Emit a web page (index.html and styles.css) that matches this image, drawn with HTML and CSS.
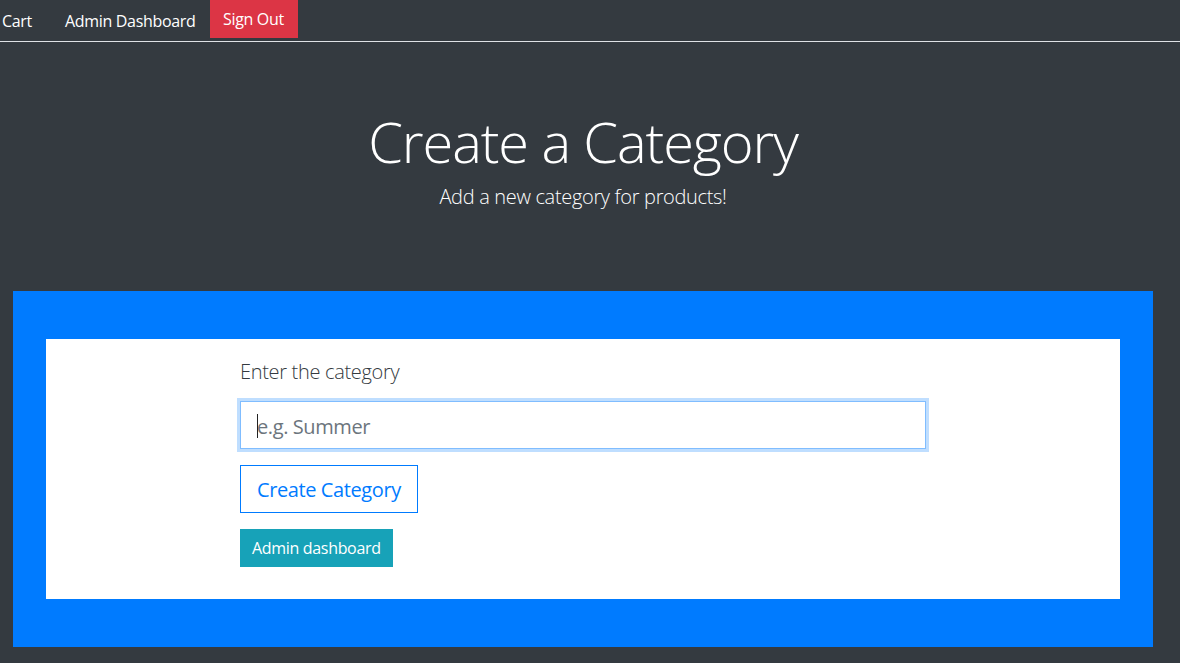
FILE: index.html
```html
<!DOCTYPE html>
<html lang="en">
<head>
<meta charset="utf-8">
<title>Create a Category</title>
<link rel="stylesheet" href="styles.css">
</head>
<body>
<nav class="topnav">
  <a class="nav-link nav-cart" href="#">Cart</a>
  <a class="nav-link nav-admin" href="#">Admin Dashboard</a>
  <a class="nav-signout" href="#">Sign Out</a>
</nav>
<header class="hero">
  <h1 class="hero-title">Create a Category</h1>
  <p class="hero-lead">Add a new category for products!</p>
</header>
<main class="panel">
  <div class="card">
    <form class="form">
      <label class="form-label" for="category">Enter the category</label>
      <div class="input-wrap">
        <input class="form-input is-focused" id="category" type="text" placeholder="e.g. Summer">
        <span class="caret"></span>
      </div>
      <div class="actions">
        <button class="btn-outline" type="button">Create Category</button>
        <a class="btn-info" href="#">Admin dashboard</a>
      </div>
    </form>
  </div>
</main>
</body>
</html>
```
FILE: styles.css
```css
* { box-sizing: border-box; }
body {
  margin: 0;
  background: #343a40;
  font-family: "Open Sans", "Noto Sans", sans-serif;
  letter-spacing: -0.02em;
  color: #212529;
}
.topnav {
  display: flex;
  align-items: flex-start;
  height: 42px;
  border-bottom: 1px solid #dfe2e6;
}
.nav-link {
  color: #fff;
  text-decoration: none;
  font-size: 16px;
  line-height: 24px;
  padding-top: 9px;
  white-space: nowrap;
}
.nav-cart { flex: 0 0 65px; padding-left: 2px; }
.nav-admin { flex: 0 0 145px; }
.nav-signout {
  background: #dc3545;
  color: #fff;
  text-decoration: none;
  font-size: 16px;
  line-height: 24px;
  padding: 7px 14px 7px 13px;
  white-space: nowrap;
}
.hero {
  text-align: center;
  color: #fff;
  margin: 0 27px 0 13px;
  padding: 66px 0 79px;
}
.hero-title {
  margin: 0;
  font-size: 56px;
  font-weight: 300;
  line-height: 67px;
  letter-spacing: -0.02em;
}
.hero-lead {
  margin: 7px 0 0;
  font-size: 20px;
  font-weight: 300;
  line-height: 30px;
}
.panel {
  background: #007bff;
  margin: 0 27px 16px 13px;
  padding: 48px 33px;
}
.card {
  background: #fff;
  padding: 18px 0 32px;
}
.form {
  width: 686px;
  margin: 0 auto;
  display: flex;
  flex-direction: column;
}
.form-label {
  font-size: 20px;
  font-weight: 300;
  line-height: 30px;
  color: #343a40;
  margin-bottom: 14px;
}
.input-wrap { position: relative; }
.form-input {
  display: block;
  width: 100%;
  height: 48px;
  padding: 9px 16px 7px;
  font-family: inherit;
  font-size: 20px;
  line-height: 30px;
  letter-spacing: -0.02em;
  color: #495057;
  background: #fff;
  border: 1px solid #ced4da;
  border-radius: 0;
  outline: none;
}
.form-input::placeholder { color: #6c757d; }
.form-input.is-focused {
  border-color: #80bdff;
  box-shadow: 0 0 0 3px rgba(0, 123, 255, 0.25);
}
.caret {
  position: absolute;
  left: 17px;
  top: 13px;
  width: 1px;
  height: 24px;
  background: #222;
}
.actions {
  display: flex;
  flex-direction: column;
  align-items: flex-start;
  gap: 16px;
  margin-top: 16px;
}
.btn-outline {
  height: 48px;
  padding: 1px 16px 0;
  font-family: inherit;
  font-size: 20px;
  line-height: 30px;
  letter-spacing: -0.02em;
  color: #007bff;
  background: #fff;
  border: 1px solid #007bff;
  border-radius: 0;
}
.btn-info {
  display: block;
  height: 38px;
  padding: 7px 12px;
  font-size: 16px;
  line-height: 24px;
  color: #fff;
  background: #17a2b8;
  text-decoration: none;
}
```
